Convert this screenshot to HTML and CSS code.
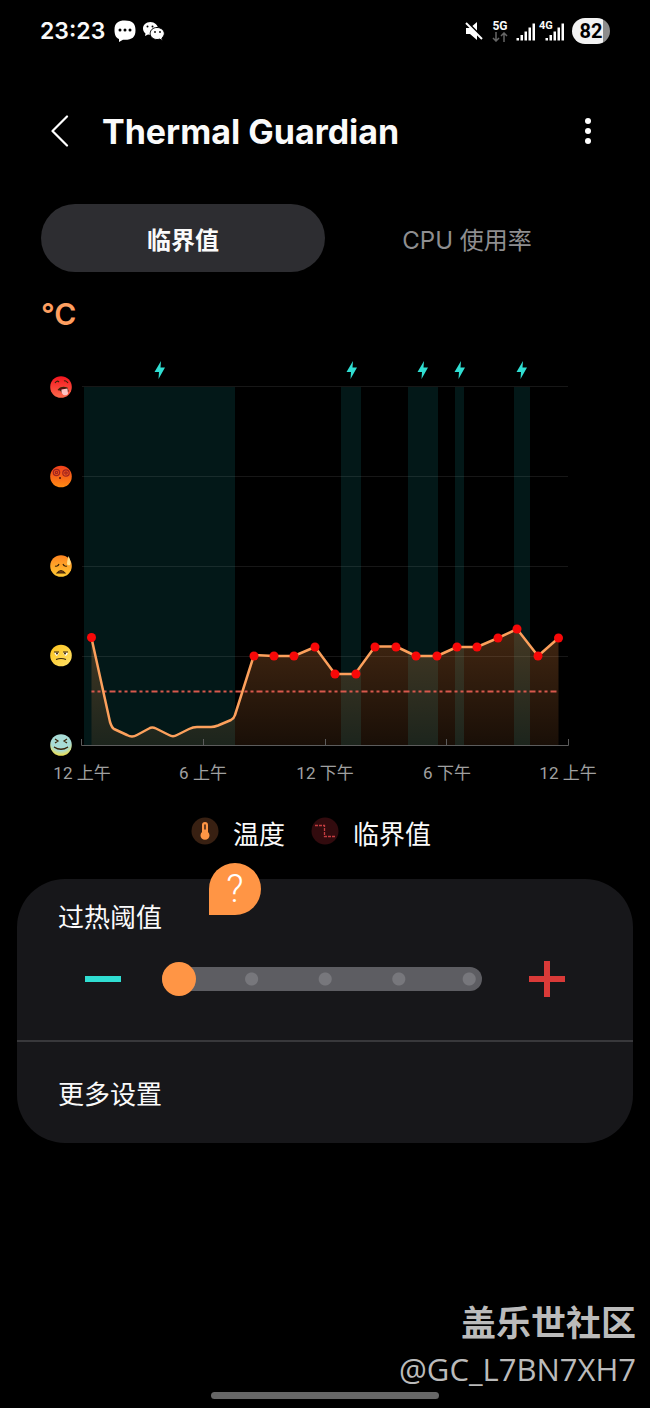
FILE: index.html
```html
<!DOCTYPE html>
<html lang="zh-CN">
<head>
<meta charset="UTF-8">
<meta name="viewport" content="width=device-width, initial-scale=1.0">
<title>Thermal Guardian</title>
<link rel="stylesheet" href="styles.css">
</head>
<body>
<div class="status-bar">
  <span class="clock">23:23</span>
  <svg class="icon-chat" width="22" height="22" viewBox="0 0 22 22">
    <path fill="#fff" d="M11 0.5C4 0.5 0.5 3 0.5 10c0 5 1.500 7.800 4.500 9V22l4-2.300h2c7 0 10.500-2.500 10.500-9.500S18 0.500 11 0.500z"/>
    <circle cx="6" cy="10" r="1.500"/><circle cx="11" cy="10" r="1.500"/><circle cx="16" cy="10" r="1.500"/>
  </svg>
  <svg class="icon-wechat" width="23" height="20" viewBox="0 0 23 20">
    <path fill="#fff" d="M8.500 1C3.800 1 1 4 1 7.500c0 2 1 3.700 2.500 4.900L3 15l3-1.500c1 .3 2 .4 3 .4 4 0 7-3 7-6.400S12.500 1 8.500 1z"/>
    <path fill="#fff" stroke="#000" d="M15 6.500c-4 0-6.800 2.600-6.800 6s2.800 6 6.800 6c.9 0 1.800-.1 2.500-.4L20.500 19.500l-.6-2.500c1.500-1.100 2.400-2.700 2.400-4.500 0-3.400-3.300-6-7.300-6z"/>
    <circle cx="5.500" cy="5.500" r="1"/><circle cx="10.500" cy="5.500" r="1"/><circle cx="13" cy="11" r=".9"/><circle cx="18" cy="11" r=".9"/>
  </svg>
  <div class="status-right">
    <svg width="20" height="20" viewBox="0 0 20 20">
      <path fill="#fff" d="M2 7h4l7-6v18l-7-6H2z"/>
      <path stroke="#000" stroke-width="2" d="M3 1L19 17"/>
      <path stroke="#fff" stroke-width="2" d="M2 2L18 18"/>
    </svg>
    <span class="network">
      <span>5G</span>
      <svg width="16" height="10" viewBox="0 0 16 10" fill="none" stroke="#666" stroke-width="1.500">
        <path d="M4 0v9M1 6l3 3 3-3M12 10V1M9 4l3-3 3 3"/>
      </svg>
    </span>
    <svg class="bars" width="19" height="19" viewBox="0 0 19 19">
      <path d="M.5 16H3v2.500H.5zM4.500 13H7v5.500H4.500zM8.500 9.500H11v9H8.500zM12.500 5.500H15v13h-2.500zM16.500 1.500H19v17h-2.500z"/>
    </svg>
    <span class="signal">
      <span class="signal-tag">4G</span>
      <svg class="bars" width="19" height="19" viewBox="0 0 19 19">
        <path d="M.5 16H3v2.500H.5zM4.500 13H7v5.500H4.500zM8.500 9.500H11v9H8.500zM12.500 5.500H15v13h-2.500zM16.500 1.500H19v17h-2.500z"/>
      </svg>
    </span>
    <span class="battery">82</span>
  </div>
</div>

<header class="header">
  <button class="icon-button" aria-label="返回">
    <svg width="18" height="32" viewBox="0 0 18 32" fill="none" stroke="#fff" stroke-width="2.200" stroke-linecap="round" stroke-linejoin="round">
      <path d="M16 1.500L1.500 16 16 30.500"/>
    </svg>
  </button>
  <h1>Thermal Guardian</h1>
  <button class="icon-button" aria-label="更多">
    <svg width="8" height="28" viewBox="0 0 8 28" fill="#fff">
      <circle cx="4" cy="4" r="3"/><circle cx="4" cy="14" r="3"/><circle cx="4" cy="24" r="3"/>
    </svg>
  </button>
</header>

<nav class="tabs">
  <button class="tab active">临界值</button>
  <button class="tab">CPU 使用率</button>
</nav>

<main>
  <div class="unit">°C</div>

  <svg class="chart" viewBox="40 350 570 440">
    <defs>
      <linearGradient id="area" x1="0" y1="0" x2="0" y2="1">
        <stop offset="0" stop-color="#ff9545" stop-opacity=".26"/>
        <stop offset="1" stop-color="#ff9545" stop-opacity=".1"/>
      </linearGradient>
      <linearGradient id="red" x1="0" y1="0" x2="0" y2="1">
        <stop offset="0" stop-color="#f5141e"/><stop offset="1" stop-color="#fb6a4c"/>
      </linearGradient>
      <linearGradient id="orange" x1="0" y1="0" x2="0" y2="1">
        <stop offset="0" stop-color="#f0401c"/><stop offset="1" stop-color="#ff8a14"/>
      </linearGradient>
      <linearGradient id="amber" x1="0" y1="0" x2="0" y2="1">
        <stop offset="0" stop-color="#ff8420"/><stop offset="1" stop-color="#ffc933"/>
      </linearGradient>
      <linearGradient id="yellow" x1="0" y1="0" x2="1" y2="1">
        <stop offset="0" stop-color="#fdc31c"/><stop offset="1" stop-color="#ffe36a"/>
      </linearGradient>
      <radialGradient id="cool" cx=".5" cy=".3" r=".7">
        <stop offset=".65" stop-color="#a8dcd6"/><stop offset="1" stop-color="#f0e04c"/>
      </radialGradient>
      <path id="bolt" d="M1 -9L-5.500 2H-1L-1.500 9L5 -2.500H.5Z"/>
    </defs>

    <!-- charging periods -->
    <g fill="#14b8b8" fill-opacity=".13">
      <rect x="84" y="387" width="151" height="358"/>
      <rect x="341" y="387" width="20" height="358"/>
      <rect x="408" y="387" width="30" height="358"/>
      <rect x="455" y="387" width="9" height="358"/>
      <rect x="514" y="387" width="16" height="358"/>
    </g>
    <g fill="#30ded2">
      <use href="#bolt" x="160" y="370"/>
      <use href="#bolt" x="352" y="370"/>
      <use href="#bolt" x="423" y="370"/>
      <use href="#bolt" x="460" y="370"/>
      <use href="#bolt" x="522" y="370"/>
    </g>

    <!-- grid -->
    <path stroke="#fff" stroke-opacity=".09" d="M82 386.500H568M82 476.500H568M82 566.500H568M82 656.500H568"/>

    <path fill="url(#area)" d="M91.500 638L112 728L132 736.500L152 727.500L173 736.500L193 727.500H213L234 718.500L254 656H294L315 647L335 674H355L375 647H396L416 656H437L457 647H477L498 638L517 629L538 656L558.500 638V745H91.500Z"/>
    <path class="axis" d="M81.500 739V745.500H568.500V739M203.500 739V745M325.500 739V745M446.500 739V745"/>
    <path class="threshold" d="M91.500 691.500H558.500"/>
    <path class="line" d="M91.500 638L110 722Q112 728 114 729L127 735Q132 738 137 735L149 728.500Q152 726.500 156 728.500L169 735Q173 737.500 177 735L189 729Q193 727 197 727H211Q214 727 218 725.500L231 720Q234 718.500 235 715L254 655L274 656H294L315 647L335 674H355L375 646.500H396L416 656H437L457 647H477L498 638L517 629L538 656L558.500 638"/>
    <g fill="#f80808">
      <circle cx="91.500" cy="637.500" r="4.500"/>
      <circle cx="254" cy="656" r="4.500"/>
      <circle cx="274" cy="656" r="4.500"/>
      <circle cx="294" cy="656" r="4.500"/>
      <circle cx="315" cy="647" r="4.500"/>
      <circle cx="335" cy="674" r="4.500"/>
      <circle cx="356" cy="674" r="4.500"/>
      <circle cx="375" cy="647" r="4.500"/>
      <circle cx="396" cy="647" r="4.500"/>
      <circle cx="416" cy="656" r="4.500"/>
      <circle cx="437" cy="656" r="4.500"/>
      <circle cx="457" cy="647" r="4.500"/>
      <circle cx="477" cy="647" r="4.500"/>
      <circle cx="498" cy="638" r="4.500"/>
      <circle cx="517" cy="629" r="4.500"/>
      <circle cx="538" cy="656" r="4.500"/>
      <circle cx="558.500" cy="638" r="4.500"/>
    </g>

    <!-- faces on the y axis -->
    <g class="face" transform="translate(61 387)">
      <circle class="head" r="10.800" fill="url(#red)"/>
      <path d="M-6 -4Q-4 -7 -2 -5M3 -6Q5 -7 7 -4"/>
      <path fill="#5a0a10" d="M-3 3Q0 -1 6 1L7 4L1 5Q-1 2 -3 3Z"/>
      <path fill="#ffc4c4" stroke="none" d="M.5 2.500L6.500 1.500L7 7Q5 9 2.500 8Q0 6 .5 2.500Z"/>
    </g>
    <g class="face" transform="translate(61 476.500)">
      <circle class="head" r="10.800" fill="url(#orange)"/>
      <g stroke="#a02420">
        <circle cx="-4.500" cy="-4" r="3.200"/><circle cx="-4.500" cy="-4" r="1.200"/>
        <circle cx="5" cy="-3.500" r="3.200"/><circle cx="5" cy="-3.500" r="1.200"/>
      </g>
      <circle cx="-1" cy="1.500" r="1" fill="#501008" stroke="none"/>
    </g>
    <g class="face" transform="translate(61 566)">
      <circle class="head" r="10.800" fill="url(#amber)"/>
      <path d="M-6 0Q-3 1 -2 -2M2 -2Q3 1 6 0"/>
      <path fill="#7a3a10" d="M-4 7Q0 2 4 7Z"/>
      <path fill="#ffe08c" stroke="none" d="M7.500 -10Q11 -3 9 -1Q6.500 0 6 -2Q6 -5 7.500 -10Z"/>
    </g>
    <g class="face" transform="translate(61 655.500)">
      <circle class="head" r="10.800" fill="url(#yellow)"/>
      <path fill="#fff" stroke="none" d="M-7 -3H-2Q-3 1 -5 0ZM2 -3H7Q6 1 4 0Z"/>
      <path d="M-7 -3.500H-2M2 -3.500H7M-5 4Q0 2 5 4"/>
      <circle cx="-4" cy="-2" r="1" fill="#3b2408" stroke="none"/><circle cx="4" cy="-2" r="1" fill="#3b2408" stroke="none"/>
    </g>
    <g class="face" transform="translate(61 745)">
      <circle class="head" r="10.800" fill="url(#cool)"/>
      <path d="M-6 -6L-3 -4L-6 -2M6 -6L3 -4L6 -2M-7 2Q0 6 7 2Q0 7 -7 2Z"/>
    </g>

    <g class="axis-label">
      <text x="82" y="779">12 上午</text>
      <text x="203" y="779">6 上午</text>
      <text x="325" y="779">12 下午</text>
      <text x="447" y="779">6 下午</text>
      <text x="568" y="779">12 上午</text>
    </g>
  </svg>

  <div class="legend">
    <div class="legend-item">
      <svg width="28" height="28" viewBox="0 0 28 28">
        <circle cx="14" cy="14" r="13.500" fill="#382012"/>
        <path fill="#ff9545" d="M11 8a3 3 0 0 1 6 0v7a4.500 4.500 0 1 1-6 0z"/>
        <path stroke="#382012" stroke-width="1.500" stroke-linecap="round" d="M14 8v4"/>
      </svg>
      <span>温度</span>
    </div>
    <div class="legend-item">
      <svg width="28" height="28" viewBox="0 0 28 28">
        <circle cx="14" cy="14" r="13.500" fill="#320b0e"/>
        <path fill="none" stroke="#c43c40" stroke-width="1.300" stroke-dasharray="3 1" d="M4 8.500h9.500v11H24"/>
      </svg>
      <span>临界值</span>
    </div>
  </div>

  <section class="card">
    <button class="help" aria-label="帮助">?</button>
    <div class="threshold-setting">
      <label for="limit">过热阈值</label>
      <div class="slider-row">
        <button class="step minus" aria-label="降低"></button>
        <input id="limit" class="slider" type="range" min="0" max="4" value="0">
        <button class="step plus" aria-label="提高"></button>
      </div>
    </div>
    <a class="more" href="#">更多设置</a>
  </section>
</main>

<footer class="footer">
  <div class="community">盖乐世社区</div>
  <div class="author">@GC_L7BN7XH7</div>
  <div class="home-bar"></div>
</footer>
</body>
</html>
```
FILE: styles.css
```css
* {
  box-sizing: border-box;
}

body {
  margin: 0;
  min-height: 100vh;
  display: flex;
  flex-direction: column;
  background: #000;
  color: #fafafa;
  font-family: Roboto, "Noto Sans CJK SC", sans-serif;
}

button {
  padding: 0;
  border: 0;
  background: none;
  color: inherit;
  font: inherit;
  cursor: pointer;
}

svg {
  display: block;
}

.status-bar {
  display: flex;
  align-items: center;
  height: 62px;
  padding: 0 40px;
}

.clock {
  font-family: Inter, sans-serif;
  font-size: 23px;
  font-weight: 600;
}

.icon-chat {
  margin-left: 9px;
}

.icon-wechat {
  margin-left: 6px;
}

.status-right {
  display: flex;
  align-items: center;
  gap: 8px;
  margin-left: auto;
}

.network {
  display: flex;
  flex-direction: column;
  align-items: center;
  font-size: 12px;
  font-weight: 700;
  line-height: 12px;
}

.bars {
  fill: #fff;
}

.signal {
  display: flex;
  position: relative;
  padding-left: 2px;
}

.signal-tag {
  position: absolute;
  top: -2px;
  left: -4px;
  font-size: 11px;
  font-weight: 700;
  line-height: 11px;
}

.battery {
  width: 38px;
  height: 26px;
  border-radius: 13px;
  background: linear-gradient(to right, #f2f2f2 82%, #8c8c8c 82%);
  color: #000;
  font-size: 20px;
  font-weight: 700;
  line-height: 27px;
  text-align: center;
}

.header {
  display: flex;
  align-items: center;
  height: 138px;
  padding: 0 42px 0 40px;
}

.header h1 {
  flex: 1;
  margin: 0 0 0 22px;
  font-family: Inter, sans-serif;
  font-size: 34px;
  font-weight: 700;
}

.icon-button {
  display: flex;
  justify-content: center;
  align-items: center;
  width: 40px;
  height: 48px;
}

.tabs {
  display: flex;
  margin: 4px 41px 0;
}

.tab {
  flex: 1;
  height: 68px;
  border-radius: 34px;
  color: #8e8e90;
  font-family: Inter, "Noto Sans CJK SC", sans-serif;
  font-size: 24px;
}

.tab.active {
  background: #2d2d31;
  color: #fafafa;
  font-weight: 700;
}

.unit {
  margin: 24px 41px 0;
  color: #ff9f60;
  font-family: Inter, sans-serif;
  font-size: 30px;
  font-weight: 600;
  line-height: 36px;
}

.chart {
  width: calc(100% - 80px);
  margin: 18px 40px 0;
}

.axis {
  fill: none;
  stroke: #5c5c5c;
}

.threshold {
  stroke: #d8584c;
  stroke-width: 2;
  stroke-dasharray: 6 3 3 3 3 3;
  stroke-dashoffset: 3;
}

.line {
  fill: none;
  stroke: #fca05c;
  stroke-width: 2.5;
  stroke-linejoin: round;
}

.face {
  fill: none;
  stroke: #3b2408;
  stroke-width: 1.2;
}

.head {
  stroke: none;
}

.axis-label {
  fill: #a0a0a0;
  font-size: 17px;
  text-anchor: middle;
}

.legend {
  display: flex;
  justify-content: center;
  gap: 26px;
  margin-top: 24px;
  padding-right: 28px;
}

.legend-item {
  display: flex;
  align-items: flex-start;
  gap: 14px;
  padding-top: 3px;
  font-size: 26px;
  line-height: 36px;
}

.card {
  position: relative;
  margin: 26px 17px 0;
  border-radius: 48px;
  background: #17171a;
  font-size: 26px;
  line-height: 38px;
}

.help {
  position: absolute;
  top: -16px;
  left: 192px;
  width: 52px;
  height: 52px;
  border-radius: 50% 50% 50% 0;
  background: #ff9545;
  color: #fff;
  font-size: 38px;
  font-weight: 300;
  line-height: 52px;
}

.threshold-setting {
  padding: 20px 0 43px;
  border-bottom: 2px solid #38383b;
}

.threshold-setting label {
  display: block;
  padding: 0 41px;
}

.slider-row {
  display: flex;
  align-items: center;
  margin-top: 24px;
  padding: 0 68px;
}

.step {
  width: 36px;
  height: 36px;
}

.minus {
  background: linear-gradient(#30ded2, #30ded2) center / 36px 6px no-repeat;
}

.plus {
  background:
    linear-gradient(#d93a38, #d93a38) center / 36px 6px no-repeat,
    linear-gradient(#d93a38, #d93a38) center / 6px 36px no-repeat;
}

.slider {
  -webkit-appearance: none;
  appearance: none;
  flex: 1;
  min-width: 0;
  height: 34px;
  margin: 0 47px 0 41px;
  background: none;
}

.slider::-webkit-slider-runnable-track {
  height: 24px;
  border-radius: 12px;
  background:
    radial-gradient(circle at 28% 50%, #77777c 6px, transparent 7px),
    radial-gradient(circle at 51% 50%, #77777c 6px, transparent 7px),
    radial-gradient(circle at 74% 50%, #77777c 6px, transparent 7px),
    radial-gradient(circle at 96% 50%, #77777c 6px, transparent 7px),
    #5d5d62;
}

.slider::-webkit-slider-thumb {
  -webkit-appearance: none;
  width: 34px;
  height: 34px;
  margin-top: -5px;
  border-radius: 50%;
  background: #ff9545;
}

.more {
  display: block;
  padding: 34px 41px 29px;
  color: inherit;
  text-decoration: none;
}

.footer {
  margin-top: auto;
  padding: 0 14px 9px;
  color: #bbb;
  text-align: right;
}

.community {
  font-size: 35px;
  font-weight: 700;
  line-height: 42px;
}

.author {
  font-family: "Open Sans", sans-serif;
  font-size: 31px;
  line-height: 46px;
}

.home-bar {
  width: 228px;
  height: 7px;
  margin: 0 auto;
  border-radius: 4px;
  background: #666;
}
```
